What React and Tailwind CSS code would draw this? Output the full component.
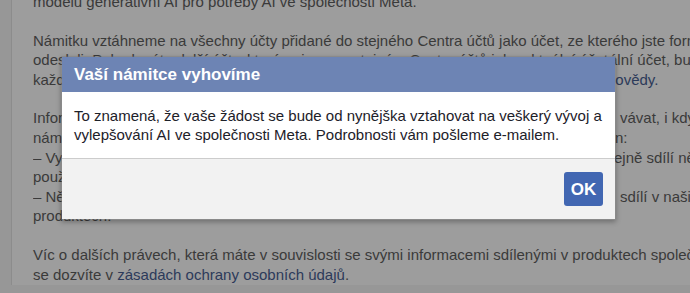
function Split({ w, left, children, className = "" }) {
  return (
    <p className={className}>
      <span className={`inline-block overflow-hidden align-top ${w}`}>{left}</span>
      {children}
    </p>
  );
}

export default function App() {
  const link = "text-[#2c3a5a]";
  return (
    <div className="relative w-[690px] h-[293px] overflow-hidden bg-[#979797]" style={{ fontFamily: '"Liberation Sans", Arial, sans-serif' }}>
      <div className="ml-[11px] h-full border-l border-[#8c8c8c] bg-[#9d9d9d] pl-[21px] text-[15px] leading-[19.6px] text-[#3a3a3a] whitespace-nowrap">
        <div className="-mt-[8px]">
          <p>modelu generativní AI pro potřeby AI ve společnosti Meta.</p>
          <p className="mt-[19px]">Námitku vztáhneme na všechny účty přidané do stejného Centra účtů jako účet, ze kterého jste formulář</p>
          <Split w="w-[576px]" left="odeslali. Pokud máte další účty, které nejsou ve stejném Centru účtů jako aktuální účet">ální účet, budete muset</Split>
          <Split w="w-[574px]" left="každý z nich odeslat samostatně. Přečtěte si další informace v Centru nápovědy">
            <span className={link}>povědy.</span>
          </Split>
          <Split className="mt-[19px]" w="w-[587px]" left="Informace o vás můžeme stále zpracovávat, i když na vaše námitky budeme dál zpraco">vávat, i když</Split>
          <Split w="w-[582px]" left="námitku nepodáte. Může se to stát například v těchto situacích">n:</Split>
          <Split w="w-[576px]" left="– Vy nebo jiné osoby v našich produktech nebo službách veřejně sdílí">řejně sdílí některé</Split>
          <p>používané informace.</p>
          <Split w="w-[587px]" left="– Někdo jiný o vás informace ve svém obsahu, který">sdílí v našich</Split>
          <p>produktech.</p>
          <p className="mt-[19px]">Víc o dalších právech, která máte v souvislosti se svými informacemi sdílenými v produktech společnosti</p>
          <p>se dozvíte v <span className={link}>zásadách ochrany osobních údajů</span>.</p>
        </div>
      </div>

      <div className="absolute left-[61px] top-[56px] w-[555px] shadow-[0_2px_5px_rgba(0,0,0,0.3)] border border-[#6f6f6f]/40">
        <div className="h-[35px] bg-[#6d84b4] pl-[12px] flex items-center">
          <span className="text-white font-bold text-[17px] leading-none">Vaší námitce vyhovíme</span>
        </div>
        <div className="bg-white px-[12px] pt-[14px] pb-[14px] text-[15px] leading-[19px] text-[#1d2129]">
          To znamená, že vaše žádost se bude od nynějška vztahovat na veškerý vývoj a vylepšování AI ve společnosti Meta. Podrobnosti vám pošleme e-mailem.
        </div>
        <div className="h-[61px] bg-[#f2f2f2] border-t border-[#cccccc] flex items-center justify-end pr-[12px]">
          <button className="w-[39px] h-[34px] rounded-[3px] bg-[#4267b2] text-white font-bold text-[17px] leading-none">OK</button>
        </div>
      </div>
    </div>
  );
}
